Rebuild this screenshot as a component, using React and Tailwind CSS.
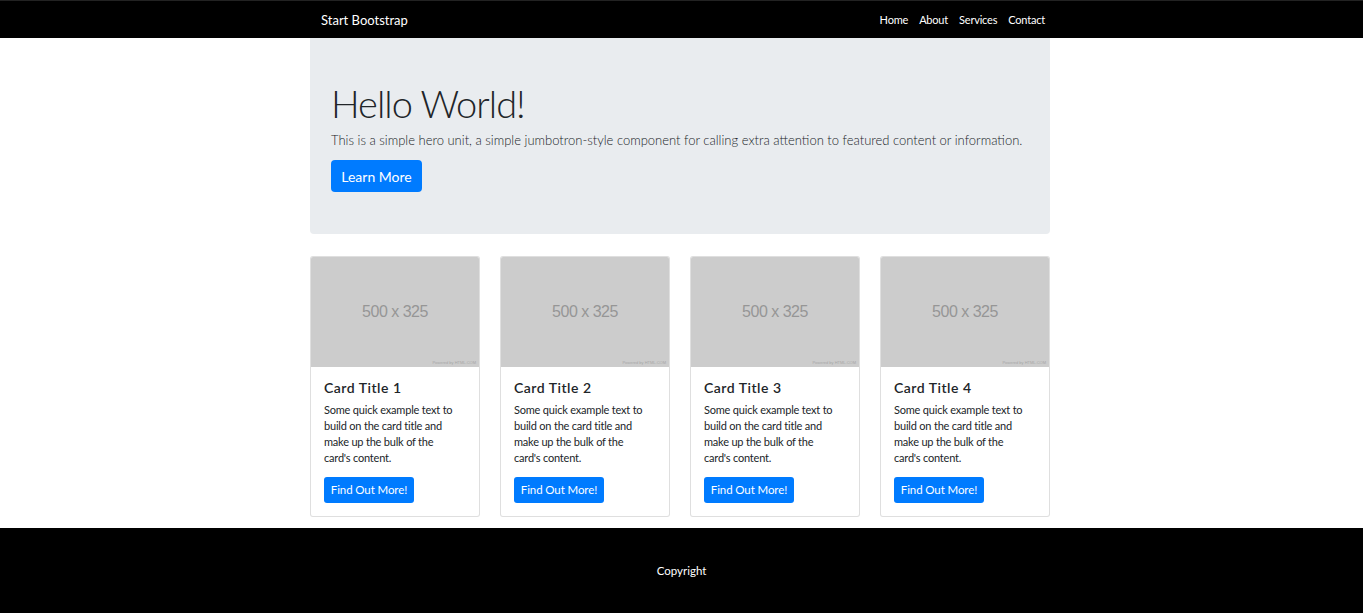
export default function App() {
  const cards = [1, 2, 3, 4];

  return (
    <div className="min-h-screen bg-white font-['Lato',sans-serif] text-[#212529]">
      {/* NAVBAR */}
      <nav className="h-[38px] bg-black border-t border-[#222]">
        <div className="w-[743px] mx-auto h-full pr-[3px]">
          <div className="h-full flex items-center justify-between pl-[11px] pr-[5px] pt-[2px]">
            <span className="text-white text-[13px]">Start Bootstrap</span>
            <div className="flex items-center gap-[11px] text-white text-[11px] tracking-[-0.2px]">
              <span>Home</span>
              <span>About</span>
              <span>Services</span>
              <span>Contact</span>
            </div>
          </div>
        </div>
      </nav>

      <main className="w-[743px] mx-auto pr-[3px]">
        {/* HERO */}
        <div className="bg-[#e9ecef] rounded-b-[4px] h-[196px] px-[21px] pt-[46px]">
          <h1 className="text-[38px] font-light leading-none tracking-[-1px]">Hello World!</h1>
          <p className="text-[13px] font-light leading-[18px] mt-[9px] text-[#212529] whitespace-nowrap">
            This is a simple hero unit, a simple jumbotron-style component for calling extra attention to featured content or information.
          </p>
          <button className="mt-[11px] bg-[#007bff] text-white text-[14px] h-[32px] w-[91px] rounded-[4px]">
            Learn More
          </button>
        </div>

        {/* CARDS */}
        <div className="grid grid-cols-4 gap-[20px] mt-[22px]">
          {cards.map((n) => (
            <div key={n} className="border border-[rgba(0,0,0,0.125)] rounded-[3px] overflow-hidden bg-white">
              <div className="relative h-[110px] bg-[#cccccc] flex items-center justify-center">
                <span className="font-['Liberation_Sans',sans-serif] text-[16px] tracking-[-0.5px] text-[#969696]">500 x 325</span>
                <span className="absolute right-[3px] bottom-[1px] font-['Liberation_Sans',sans-serif] text-[4px] text-[#a6a6a6]">
                  Powered by HTML.COM
                </span>
              </div>
              <div className="px-[13px] pt-[12px] pb-[13px]">
                <h5 className="text-[14px] font-semibold leading-[18px] tracking-[0.5px]">Card Title {n}</h5>
                <p className="text-[11px] leading-[16px] mt-[5px] pr-[8px] tracking-[-0.2px]">
                  Some quick example text to build on the card title and make up the bulk of the card's content.
                </p>
                <button className="mt-[11px] bg-[#007bff] text-white text-[11.5px] tracking-[-0.1px] h-[26px] w-[90px] rounded-[3px]">
                  Find Out More!
                </button>
              </div>
            </div>
          ))}
        </div>
      </main>

      {/* FOOTER */}
      <footer className="mt-[11px] h-[85px] bg-black flex items-center justify-center">
        <span className="text-white text-[11.5px]">Copyright</span>
      </footer>
    </div>
  );
}
